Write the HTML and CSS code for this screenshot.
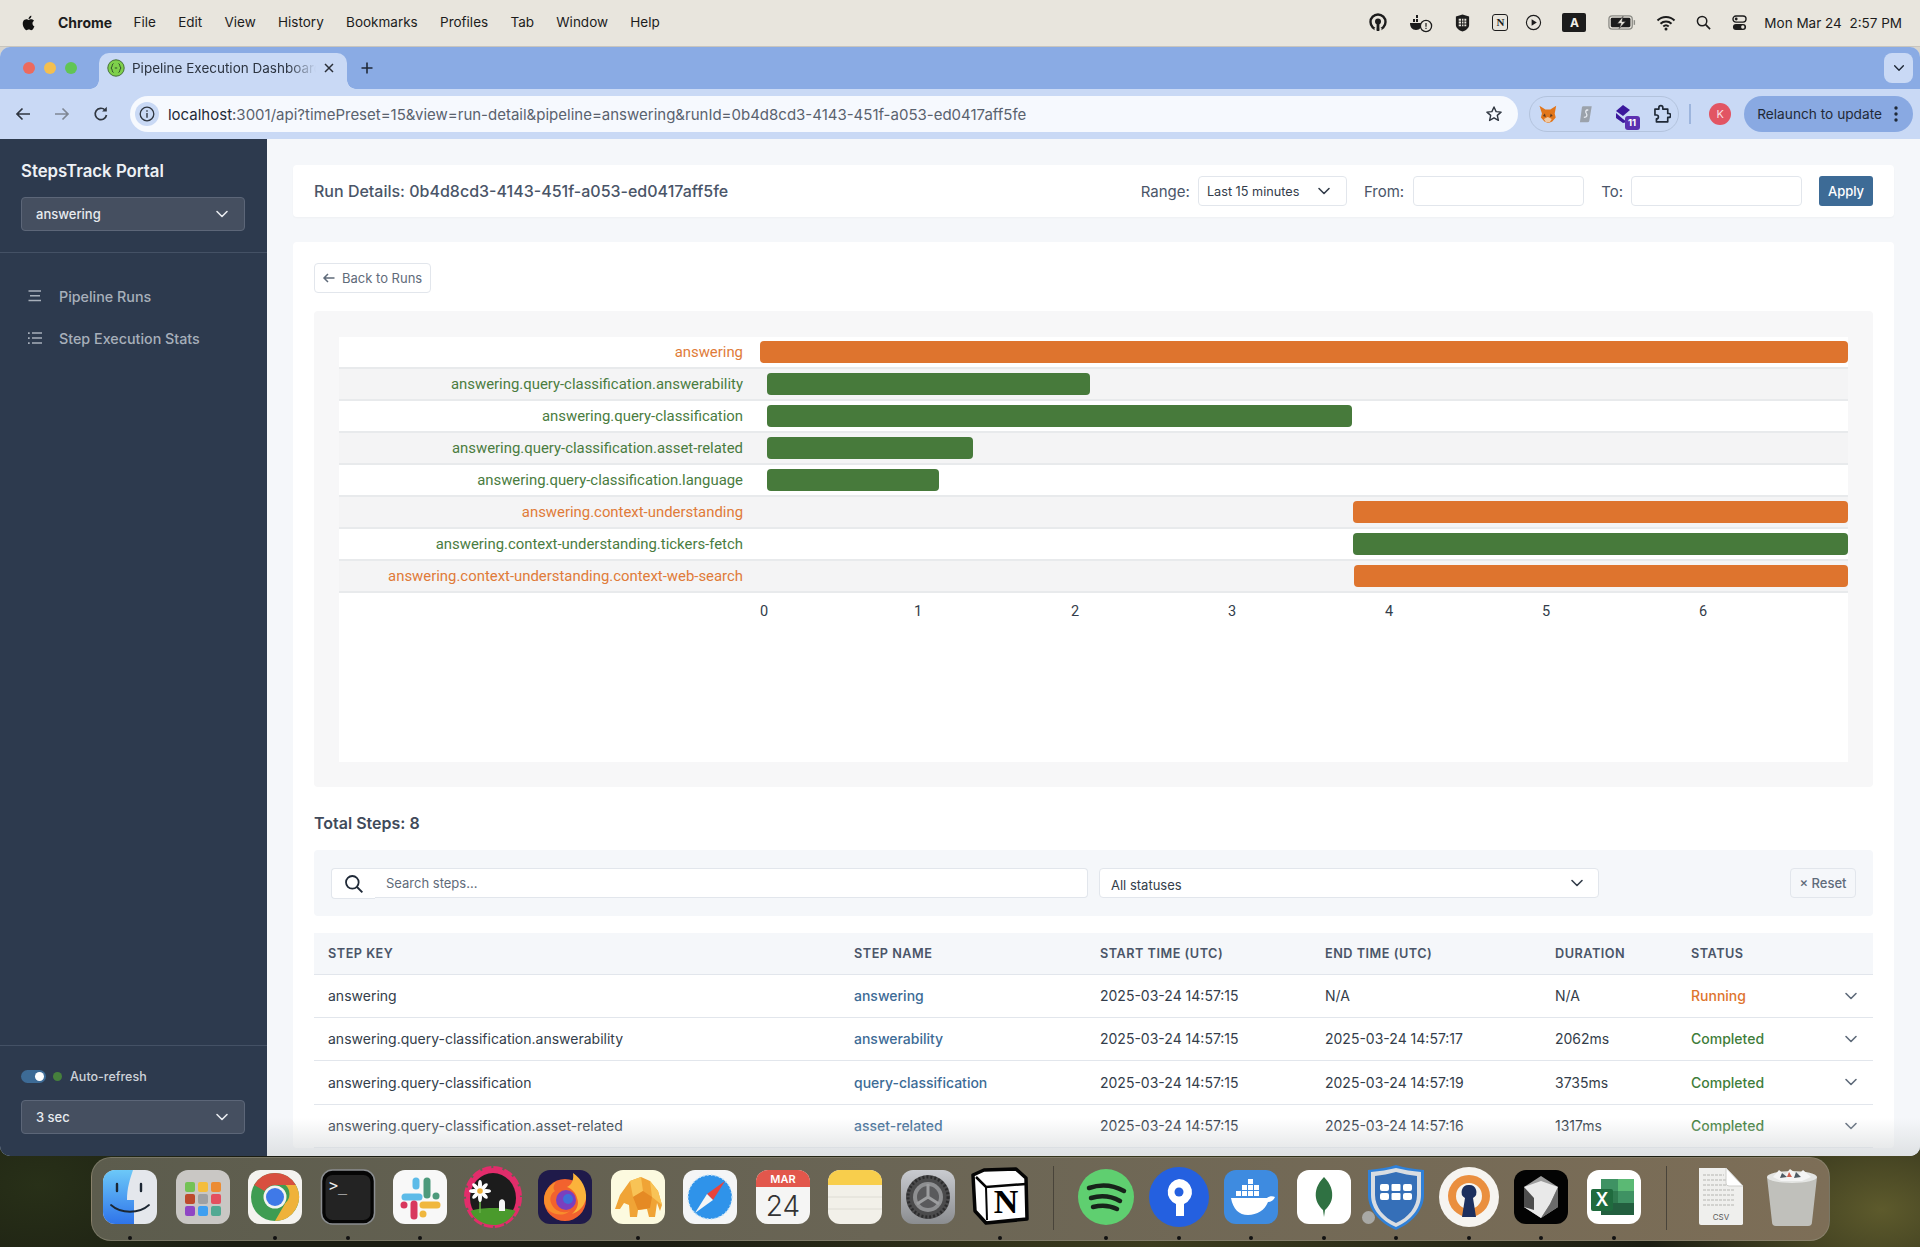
FILE: index.html
```html
<!DOCTYPE html>
<html lang="en">
<head>
    <meta charset="UTF-8">
    <title>Pipeline Execution Dashboard</title>
    <link rel="stylesheet" href="styles.css">
</head>
<body>
    <svg class="sprite">
        <symbol id="chev" viewBox="0 0 16 16"><path d="M3 5.500l5 5 5-5" fill="none" stroke="currentColor" stroke-width="1.600" stroke-linecap="round" stroke-linejoin="round"/></symbol>
    </svg>

    <header class="menubar">
        <svg class="apple" viewBox="0 0 24 24" width="17" height="20"><path d="M17.600 12.700c0-2.600 2.100-3.800 2.200-3.900-1.200-1.800-3.100-2-3.700-2-1.600-.2-3.100.9-3.900.9s-2-.9-3.300-.9c-1.700 0-3.300 1-4.200 2.500-1.800 3.100-.5 7.700 1.300 10.200.9 1.200 1.900 2.600 3.200 2.600s1.800-.8 3.300-.8 2 .8 3.300.8 2.200-1.200 3.100-2.500c1-1.400 1.400-2.800 1.400-2.900-.1 0-2.700-1-2.700-4zM15 5.100c.7-.9 1.200-2 1.100-3.200-1 0-2.300.7-3 1.500-.6.7-1.200 1.900-1.100 3.100 1.200.1 2.300-.6 3-1.400z"/></svg>
        <nav class="menu">
            <b>Chrome</b><span>File</span><span>Edit</span><span>View</span><span>History</span><span>Bookmarks</span><span>Profiles</span><span>Tab</span><span>Window</span><span>Help</span>
        </nav>
        <div class="status">
            <svg viewBox="0 0 20 20" width="20" height="20"><circle cx="10" cy="9" r="7.500" fill="none" stroke="#1c1c1c" stroke-width="2.400"/><circle cx="10" cy="8.500" r="3" fill="#1c1c1c"/><path d="M8.600 9h2.800v9H8.600z" fill="#1c1c1c"/><path d="M6.500 15h2v3h-2zM11.500 15h2v3h-2z" fill="#e8e5dd"/></svg>
            <svg viewBox="0 0 24 20" width="24" height="20"><path d="M1 10h12c0 4-2 7-6 7s-6-3-6-7z" fill="#1c1c1c"/><path d="M4 6h2v3H4zM7 6h2v3H7zM7 2h2v3H7z" fill="#1c1c1c"/><circle cx="17" cy="13" r="5.600" fill="#e8e5dd" stroke="#1c1c1c" stroke-width="1.300"/><path d="M16.400 10h1.200v3.800h-1.200zM16.400 14.800h1.200V16h-1.200z" fill="#1c1c1c"/></svg>
            <svg viewBox="0 0 18 20" width="17" height="20"><path d="M9 1l7 2v9c0 3-3 5.500-7 7-4-1.500-7-4-7-7V3z" fill="#1c1c1c"/><path d="M5 5.500h8v2H5zM5 8.500h8v2H5zM5 11.500h8v2H5z" fill="#e8e5dd"/><path d="M7.500 5h1v9h-1zM10 5h1v9h-1z" fill="#1c1c1c"/></svg>
            <span class="status-n">N</span>
            <svg viewBox="0 0 18 18" width="17" height="17"><circle cx="9" cy="9" r="7.500" fill="none" stroke="#1c1c1c" stroke-width="1.200"/><path d="M7 5.500l5.500 3.500L7 12.500z" fill="#1c1c1c"/></svg>
            <span class="status-a">A</span>
            <svg viewBox="0 0 30 16" width="28" height="15"><rect x="1" y="1" width="25" height="14" rx="3.500" fill="none" stroke="#8c8c86" stroke-width="1.400"/><rect x="3" y="3" width="21" height="10" rx="1.500" fill="#1c1c1c"/><path d="M27.500 5.500h1.500v5h-1.500z" fill="#8c8c86"/><path d="M16 1.500L10 9h4l-2 5.500L19 7h-4z" fill="#e8e5dd" stroke="#1c1c1c" stroke-width=".6"/></svg>
            <svg viewBox="0 0 20 16" width="20" height="16"><path d="M1.500 5.500a12 12 0 0 1 17 0M4.500 8.700a8 8 0 0 1 11 0M7.300 11.500a4 4 0 0 1 5.400 0" fill="none" stroke="#1c1c1c" stroke-width="2"/><circle cx="10" cy="14" r="1.500" fill="#1c1c1c"/></svg>
            <svg viewBox="0 0 16 16" width="15" height="15"><circle cx="6.500" cy="6.500" r="5" fill="none" stroke="#1c1c1c" stroke-width="1.600"/><path d="M10.300 10.300L15 15" stroke="#1c1c1c" stroke-width="1.800"/></svg>
            <svg viewBox="0 0 16 18" width="15" height="18"><rect x="1" y="1.500" width="14" height="6.500" rx="3.200" fill="none" stroke="#1c1c1c" stroke-width="1.400"/><circle cx="4.500" cy="4.700" r="1.500" fill="#1c1c1c"/><rect x="1" y="10" width="14" height="6.500" rx="3.200" fill="#1c1c1c"/><circle cx="11.500" cy="13.200" r="1.800" fill="#e8e5dd"/></svg>
            <span class="clock">Mon Mar 24&nbsp;&nbsp;2:57 PM</span>
        </div>
    </header>

    <div class="window">
        <div class="tabstrip">
            <div class="lights"><i class="red"></i><i class="amber"></i><i class="green"></i></div>
            <div class="tab">
                <svg viewBox="0 0 18 18" width="18" height="18"><circle cx="9" cy="9" r="8.200" fill="#7ed04b" stroke="#46713a"/><path d="M6.500 4.500C5 4.500 5.500 8 4 9c1.500 1 1 4.500 2.500 4.500M11.500 4.500C13 4.500 12.500 8 14 9c-1.500 1-1 4.500-2.500 4.500M7.800 9h2.400" fill="none" stroke="#2f4d2a" stroke-width="1"/></svg>
                <span class="tab-title">Pipeline Execution Dashboard</span>
                <svg viewBox="0 0 12 12" width="12" height="12"><path d="M2 2l8 8M10 2l-8 8" stroke="#2a2f38" stroke-width="1.500"/></svg>
            </div>
            <svg class="new-tab" viewBox="0 0 14 14" width="14" height="14"><path d="M7 1.500v11M1.500 7h11" stroke="#1f2937" stroke-width="1.600"/></svg>
            <button class="tab-list"><svg width="14" height="14"><use href="#chev"/></svg></button>
        </div>

        <div class="toolbar">
            <svg class="nav-icon" viewBox="0 0 18 18" width="18" height="18"><path d="M16 9H3M8.500 3.500L3 9l5.500 5.500" fill="none" stroke="#2f3640" stroke-width="1.700"/></svg>
            <svg class="nav-icon" viewBox="0 0 18 18" width="18" height="18"><path d="M2 9h13M9.500 3.500L15 9l-5.500 5.500" fill="none" stroke="#7f8794" stroke-width="1.700"/></svg>
            <svg class="nav-icon" viewBox="0 0 18 18" width="18" height="18"><path d="M14.500 10a5.700 5.700 0 1 1-1.500-5" fill="none" stroke="#2f3640" stroke-width="1.700"/><path d="M14.800 1.800v4.700h-4.700z" fill="#2f3640"/></svg>
            <div class="omnibox">
                <span class="site-info"><svg viewBox="0 0 16 16" width="16" height="16"><circle cx="8" cy="8" r="6.800" fill="none" stroke="#2f3640" stroke-width="1.300"/><path d="M7.300 7h1.400v4.700H7.300zM7.300 4.300h1.400v1.400H7.300z" fill="#2f3640"/></svg></span>
                <span class="url"><b>localhost</b>:3001/api?timePreset=15&amp;view=run-detail&amp;pipeline=answering&amp;runId=0b4d8cd3-4143-451f-a053-ed0417aff5fe</span>
                <svg viewBox="0 0 18 18" width="18" height="18"><path d="M9 2l2.100 4.600 5 .5-3.800 3.300 1.100 5L9 12.800l-4.400 2.600 1.100-5L1.900 7.100l5-.5z" fill="none" stroke="#2f3640" stroke-width="1.400" stroke-linejoin="round"/></svg>
            </div>
            <div class="extensions">
                <svg viewBox="0 0 20 20" width="20" height="20"><path d="M1.500 1.500l6 4h5l6-4-1.500 8 1 4-3.500 4-3 1.500h-2l-3-1.500-3.500-4 1-4z" fill="#e2761b"/><path d="M7 9.500L5 12l3 1zM13 9.500l2 2.500-3 1z" fill="#5c3a21"/><path d="M6 15l4-2 4 2-2 3.500H8z" fill="#f0c9a4"/></svg>
                <svg viewBox="0 0 20 20" width="20" height="20"><path d="M7 2h9l-2.500 15a2 2 0 0 1-2 1.500H4l2-15A2 2 0 0 1 7 2z" fill="#9ba2ab"/><path d="M12.500 6c-3-.5-3 2-2 3.500s1 4-2.500 4" fill="none" stroke="#e8ecf2" stroke-width="1.300"/></svg>
                <span class="ext-stack">
                    <svg viewBox="0 0 20 20" width="20" height="20"><path d="M9 1l7 5-7 6-7-5z" fill="#3b189c"/><path d="M2 9l7 6 4 3-4 1-7-5z" fill="#3b189c"/></svg>
                    <b class="ext-badge">11</b>
                </span>
                <svg viewBox="0 0 20 20" width="20" height="20"><path d="M3 5h4V3.500a2 2 0 0 1 4 0V5h5v4.500h1a2 2 0 0 1 0 4h-1V18H4.500v-3a2 2 0 0 0 0-4H3z" fill="none" stroke="#1f2937" stroke-width="1.700" stroke-linejoin="round"/></svg>
            </div>
            <i class="tool-sep"></i>
            <span class="avatar">K</span>
            <div class="relaunch">
                <span>Relaunch to update</span>
                <svg viewBox="0 0 4 18" width="4" height="18"><circle cx="2" cy="3" r="1.700" fill="#1f2937"/><circle cx="2" cy="9" r="1.700" fill="#1f2937"/><circle cx="2" cy="15" r="1.700" fill="#1f2937"/></svg>
            </div>
        </div>

        <div class="app">
            <aside class="sidebar">
                <div class="side-head">
                    <h1>StepsTrack Portal</h1>
                    <div class="side-select"><span>answering</span><svg width="16" height="16"><use href="#chev"/></svg></div>
                </div>
                <ul class="side-nav">
                    <li><svg viewBox="0 0 16 16" width="16" height="16"><path d="M1.500 3h12.500M3 7.800h10M1.500 12.500h12.500" stroke="currentColor" stroke-width="1.500"/></svg>Pipeline Runs</li>
                    <li><svg viewBox="0 0 16 16" width="16" height="16"><path d="M5 3h10M5 8h10M5 13h10" stroke="currentColor" stroke-width="1.500"/><path d="M1 2.200h1.700v1.700H1zM1 7.200h1.700v1.700H1zM1 12.200h1.700v1.700H1z" fill="currentColor"/></svg>Step Execution Stats</li>
                </ul>
                <div class="side-foot">
                    <div class="refresh-row"><span class="switch"></span><i class="live-dot"></i><span>Auto-refresh</span></div>
                    <div class="side-select"><span>3 sec</span><svg width="16" height="16"><use href="#chev"/></svg></div>
                </div>
            </aside>

            <main class="main">
                <section class="topbar">
                    <h2>Run Details: 0b4d8cd3-4143-451f-a053-ed0417aff5fe</h2>
                    <div class="range">
                        <label>Range:</label>
                        <div class="select range-select"><span>Last 15 minutes</span><svg width="16" height="16"><use href="#chev"/></svg></div>
                        <label class="from">From:</label>
                        <input class="date-input" type="text">
                        <label class="to">To:</label>
                        <input class="date-input date-to" type="text">
                        <button class="apply">Apply</button>
                    </div>
                </section>

                <section class="detail">
                    <button class="back"><svg viewBox="0 0 14 14" width="14" height="14"><path d="M12.500 7H2M6 3L2 7l4 4" fill="none" stroke="currentColor" stroke-width="1.500"/></svg>Back to Runs</button>

                    <div class="chart-panel">
                        <div class="chart">
                            <div class="row running"><div class="row-label">answering</div><div class="row-track"><div class="bar bar-root" style="margin-left:0;width:100%"></div></div></div>
                            <div class="row done"><div class="row-label">answering.query-classification.answerability</div><div class="row-track"><div class="bar" style="margin-left:.64%;width:29.7%"></div></div></div>
                            <div class="row done"><div class="row-label">answering.query-classification</div><div class="row-track"><div class="bar" style="margin-left:.64%;width:53.8%"></div></div></div>
                            <div class="row done"><div class="row-label">answering.query-classification.asset-related</div><div class="row-track"><div class="bar" style="margin-left:.64%;width:18.95%"></div></div></div>
                            <div class="row done"><div class="row-label">answering.query-classification.language</div><div class="row-track"><div class="bar" style="margin-left:.64%;width:15.8%"></div></div></div>
                            <div class="row running"><div class="row-label">answering.context-understanding</div><div class="row-track"><div class="bar" style="margin-left:54.5%;width:45.5%"></div></div></div>
                            <div class="row done"><div class="row-label">answering.context-understanding.tickers-fetch</div><div class="row-track"><div class="bar" style="margin-left:54.5%;width:45.5%"></div></div></div>
                            <div class="row running"><div class="row-label">answering.context-understanding.context-web-search</div><div class="row-track"><div class="bar" style="margin-left:54.6%;width:45.4%"></div></div></div>
                            <div class="axis"><span>0</span><span>1</span><span>2</span><span>3</span><span>4</span><span>5</span><span>6</span></div>
                        </div>
                    </div>

                    <h3 class="total">Total Steps: 8</h3>

                    <div class="filters">
                        <div class="search">
                            <span class="search-icon"><svg viewBox="0 0 18 18" width="20" height="20"><circle cx="7.500" cy="7.500" r="5.700" fill="none" stroke="#1f2937" stroke-width="1.600"/><path d="M11.700 11.700L16.500 16.500" stroke="#1f2937" stroke-width="1.700"/></svg></span>
                            <input class="search-input" type="text" placeholder="Search steps...">
                        </div>
                        <div class="select status-select"><span>All statuses</span><svg width="16" height="16"><use href="#chev"/></svg></div>
                        <button class="reset">&times; Reset</button>
                    </div>

                    <table class="steps">
                        <thead>
                            <tr><th class="c-key">Step Key</th><th class="c-name">Step Name</th><th class="c-start">Start Time (UTC)</th><th class="c-end">End Time (UTC)</th><th class="c-dur">Duration</th><th class="c-status">Status</th><th></th></tr>
                        </thead>
                        <tbody>
                            <tr><td>answering</td><td><a>answering</a></td><td>2025-03-24 14:57:15</td><td>N/A</td><td>N/A</td><td class="st-running">Running</td><td><svg width="16" height="16"><use href="#chev"/></svg></td></tr>
                            <tr><td>answering.query-classification.answerability</td><td><a>answerability</a></td><td>2025-03-24 14:57:15</td><td>2025-03-24 14:57:17</td><td>2062ms</td><td class="st-done">Completed</td><td><svg width="16" height="16"><use href="#chev"/></svg></td></tr>
                            <tr><td>answering.query-classification</td><td><a>query-classification</a></td><td>2025-03-24 14:57:15</td><td>2025-03-24 14:57:19</td><td>3735ms</td><td class="st-done">Completed</td><td><svg width="16" height="16"><use href="#chev"/></svg></td></tr>
                            <tr><td>answering.query-classification.asset-related</td><td><a>asset-related</a></td><td>2025-03-24 14:57:15</td><td>2025-03-24 14:57:16</td><td>1317ms</td><td class="st-done">Completed</td><td><svg width="16" height="16"><use href="#chev"/></svg></td></tr>
                        </tbody>
                    </table>
                </section>
            </main>
        </div>
    </div>

    <footer class="dock">
        <div class="dock-item on"><svg viewBox="0 0 60 60"><defs><linearGradient id="fb" x1="0" y1="0" x2="0" y2="1"><stop offset="0" stop-color="#6cc8f8"/><stop offset="1" stop-color="#2f74ea"/></linearGradient></defs><rect x="3" y="3" width="54" height="54" rx="12" fill="#e4e7ec"/><path d="M15 3h18c-3 9-6 18-6 30h7v24H15A12 12 0 0 1 3 45V15A12 12 0 0 1 15 3z" fill="url(#fb)"/><path d="M17 17v7M41 17v7" stroke="#1c2733" stroke-width="2.400" stroke-linecap="round"/><path d="M11 38c10 9 28 9 38 0" fill="none" stroke="#1c2733" stroke-width="1.800" stroke-linecap="round"/></svg></div>
        <div class="dock-item"><svg viewBox="0 0 60 60"><rect x="3" y="3" width="54" height="54" rx="12" fill="#c9c7c4"/><rect x="12" y="15" width="10" height="10" rx="2" fill="#74c255"/><rect x="25" y="15" width="10" height="10" rx="2" fill="#f4bd3c"/><rect x="38" y="15" width="10" height="10" rx="2" fill="#ec8c33"/><rect x="12" y="27" width="10" height="10" rx="2" fill="#bd4a2c"/><rect x="25" y="27" width="10" height="10" rx="2" fill="#9ea0a2"/><rect x="38" y="27" width="10" height="10" rx="2" fill="#e4505f"/><rect x="12" y="39" width="10" height="10" rx="2" fill="#8f46c4"/><rect x="25" y="39" width="10" height="10" rx="2" fill="#3f9ff0"/><rect x="38" y="39" width="10" height="10" rx="2" fill="#52a993"/></svg></div>
        <div class="dock-item on"><svg viewBox="0 0 60 60"><rect x="3" y="3" width="54" height="54" rx="12" fill="#f4f3ef"/><circle cx="30" cy="30" r="24" fill="#3f9c52"/><path d="M9.200 18A24 24 0 0 1 50.800 18H30a12 12 0 0 0-10.400 6z" fill="#d8503f"/><path d="M50.800 18A24 24 0 0 1 30 54l10.400-18a12 12 0 0 0 0-18z" fill="#efb23a"/><circle cx="30" cy="30" r="11.500" fill="#f4f3ef"/><circle cx="30" cy="30" r="9" fill="#3f79e8"/></svg></div>
        <div class="dock-item on"><svg viewBox="0 0 60 60"><rect x="3.500" y="3" width="53" height="54" rx="11" fill="#050505" stroke="#8a8d90" stroke-width="1.500"/><rect x="7.500" y="8" width="45" height="45" rx="7" fill="#232323"/><text class="term-text" x="11" y="24">&gt;_</text></svg></div>
        <div class="dock-item on"><svg viewBox="0 0 60 60"><rect x="3" y="3" width="54" height="54" rx="12" fill="#f8f8f8"/><g stroke-width="7" stroke-linecap="round"><path d="M37 14v14" stroke="#4d9a7c"/><path d="M46 29h0" stroke="#4d9a7c"/><path d="M15 30h14" stroke="#5dbbe8"/><path d="M26 14v5" stroke="#5dbbe8"/><path d="M33 38h14" stroke="#f0b73e"/><path d="M33 47h0" stroke="#f0b73e"/><path d="M24 37v12" stroke="#d8385e"/><path d="M14 38h0" stroke="#d8385e"/></g></svg></div>
        <div class="dock-item"><svg viewBox="0 0 60 60"><ellipse cx="30" cy="30" rx="27" ry="29" fill="none" stroke="#e22d6b" stroke-width="4" stroke-dasharray="9 2"/><ellipse cx="30" cy="30" rx="27" ry="29" fill="#e22d6b"/><ellipse cx="30" cy="31" rx="23" ry="25" fill="#1c1c1c"/><path d="M7.500 44c8-4 36-4 45 0-5 10-14 14-22 14S12 54 7.500 44z" fill="#4a9a2c"/><path d="M36 36c0-5 6-5 6 0v8h-6z" fill="#f5f5f5"/><path d="M17 30v16" stroke="#69b048" stroke-width="1.500"/><g fill="#fff"><ellipse cx="17" cy="18" rx="2" ry="5"/><ellipse cx="17" cy="30" rx="2" ry="5"/><ellipse cx="11" cy="24" rx="5" ry="2"/><ellipse cx="23" cy="24" rx="5" ry="2"/><ellipse cx="12.800" cy="19.800" rx="2" ry="4.500" transform="rotate(-45 12.800 19.800)"/><ellipse cx="21.200" cy="28.200" rx="2" ry="4.500" transform="rotate(-45 21.200 28.200)"/><ellipse cx="21.200" cy="19.800" rx="2" ry="4.500" transform="rotate(45 21.200 19.800)"/><ellipse cx="12.800" cy="28.200" rx="2" ry="4.500" transform="rotate(45 12.800 28.200)"/></g><circle cx="17" cy="24" r="2.800" fill="#efb23a"/></svg></div>
        <div class="dock-item"><svg viewBox="0 0 60 60"><rect x="3" y="3" width="54" height="54" rx="12" fill="#1f1a4a"/><circle cx="30" cy="33" r="21" fill="#f2622e"/><path d="M38 6c9 6 14 16 13 26-2 8-8 13-14 15 6-5 7-11 5-16-1-5-5-9-10-11 5-2 7-8 6-14z" fill="#fbb33b"/><path d="M9 33c0-8 5-15 12-18-3 4-3 7-1 9-5 3-6 9-3 14 3 6 11 9 18 6-9 8-26 2-26-11z" fill="#f88d2c"/><circle cx="31" cy="33" r="10" fill="#7b3fbe"/><circle cx="33" cy="32" r="5" fill="#3f6fd8"/></svg></div>
        <div class="dock-item on"><svg viewBox="0 0 60 60"><rect x="3" y="3" width="54" height="54" rx="12" fill="#fcfadf"/><path d="M7 42l5-14 10-14 11-4 9 4 8 10 4 14-2 6-3-8-2 14h-6l-2-8-9 1-1 7h-7l-1-12-5-2-4 6z" fill="#f0a436"/><path d="M22 14l11-4 2 14-10 6zM42 14l8 10 4 14-10-8z" fill="#f8c356"/><path d="M25 30l10-6 9 6-2 11-12 2z" fill="#e58a24"/></svg></div>
        <div class="dock-item"><svg viewBox="0 0 60 60"><rect x="3" y="3" width="54" height="54" rx="12" fill="#f4f5f6"/><circle cx="30" cy="30" r="22" fill="#2f93ea"/><circle cx="30" cy="30" r="22" fill="none" stroke="#bfe0f8" stroke-width="1.500" stroke-dasharray="1.500 2.500"/><path d="M45 14L33 33l-6-6z" fill="#e8433c"/><path d="M15 46l12-19 6 6z" fill="#f5f5f5"/></svg></div>
        <div class="dock-item"><svg viewBox="0 0 60 60"><rect x="3" y="3" width="54" height="54" rx="12" fill="#f5f5f4"/><path d="M3 20V15A12 12 0 0 1 15 3h30a12 12 0 0 1 12 12v5z" fill="#e2574c"/><text class="cal-month" x="30" y="16">MAR</text><text class="cal-day" x="30" y="49">24</text></svg></div>
        <div class="dock-item"><svg viewBox="0 0 60 60"><rect x="3" y="3" width="54" height="54" rx="12" fill="#f2f0e9"/><path d="M3 18v-3A12 12 0 0 1 15 3h30a12 12 0 0 1 12 12v3z" fill="#f8ce4c"/><path d="M3 30h54M3 42h54" stroke="#dedcd4"/></svg></div>
        <div class="dock-item"><svg viewBox="0 0 60 60"><defs><linearGradient id="sg" x1="0" y1="0" x2="0" y2="1"><stop offset="0" stop-color="#c9cbd0"/><stop offset="1" stop-color="#8b8d90"/></linearGradient></defs><rect x="3" y="3" width="54" height="54" rx="12" fill="url(#sg)"/><circle cx="30" cy="30" r="22" fill="#4b4b4c"/><circle cx="30" cy="30" r="20" fill="none" stroke="#2c2c2d" stroke-width="3" stroke-dasharray="2 2"/><circle cx="30" cy="30" r="15" fill="#8e8f91"/><circle cx="30" cy="30" r="11" fill="#5a5a5c"/><path d="M30 30V17M30 30L19 37M30 30l11 7" stroke="#9d9ea0" stroke-width="3"/></svg></div>
        <div class="dock-item on"><svg viewBox="0 0 60 60"><path d="M14 3l32-1 10 9 1 41-41 4-11-12L3 8z" fill="#fff" stroke="#050505" stroke-width="3.500" stroke-linejoin="round"/><path d="M6 10l10 10 40-3" fill="none" stroke="#050505" stroke-width="2.500"/><path d="M16 20l1 33" stroke="#050505" stroke-width="2"/><text class="notion-n" x="36" y="46">N</text></svg></div>
        <i class="dock-sep"></i>
        <div class="dock-item on"><svg viewBox="0 0 60 60"><ellipse cx="30" cy="30" rx="28" ry="28" fill="#5fcf70"/><path d="M13 21c12-4 24-3 35 3M15 31c10-3 20-2 29 3M17 40c8-2 16-2 24 2" fill="none" stroke="#17231a" stroke-width="4.500" stroke-linecap="round"/></svg></div>
        <div class="dock-item on"><svg viewBox="0 0 60 60"><circle cx="30" cy="30" r="30" fill="#2460e0"/><path d="M30 12a13 13 0 0 1 5 25v12h-8V37a13 13 0 0 1 3-25z" fill="#fff"/><circle cx="30" cy="25" r="4.500" fill="#2460e0"/></svg></div>
        <div class="dock-item on"><svg viewBox="0 0 60 60"><rect x="3" y="3" width="54" height="54" rx="12" fill="#3e8be0"/><path d="M10 31h36c2-2 6-2 8-1-1 3-4 5-7 5-3 8-11 13-20 13-9 0-15-6-17-17z" fill="#fff"/><g fill="#fff"><rect x="15" y="24" width="5" height="5"/><rect x="21" y="24" width="5" height="5"/><rect x="27" y="24" width="5" height="5"/><rect x="33" y="24" width="5" height="5"/><rect x="21" y="18" width="5" height="5"/><rect x="27" y="18" width="5" height="5"/><rect x="33" y="18" width="5" height="5"/><rect x="27" y="12" width="5" height="5"/></g></svg></div>
        <div class="dock-item on"><svg viewBox="0 0 60 60"><rect x="3" y="3" width="54" height="54" rx="12" fill="#fff"/><path d="M30 10c7 7 9 14 8 21-1 6-5 10-7 12l-1 7-1-7c-2-2-6-6-7-12-1-7 1-14 8-21z" fill="#2f7142"/></svg></div>
        <div class="dock-item on"><svg viewBox="0 0 60 60"><path d="M30-2c9 3 19 4 28 5v25c0 15-12 28-28 35C14 56 2 43 2 28V3c9-1 19-2 28-5z" fill="#2f80d8"/><path d="M30 1c8 2 16 3 25 4v23c0 14-11 26-25 32C16 54 5 42 5 28V5c9-1 17-2 25-4z" fill="#d9dde2"/><path d="M30 5c7 2 14 3 21 4v19c0 12-9 23-21 28C18 51 9 40 9 28V9c7-1 14-2 21-4z" fill="#356fb8"/><g fill="#fff"><rect x="14" y="17" width="9" height="7" rx="2"/><rect x="25.500" y="17" width="9" height="7" rx="1"/><rect x="37" y="17" width="9" height="7" rx="2"/><rect x="14" y="26" width="9" height="7" rx="2"/><rect x="25.500" y="26" width="9" height="7" rx="1"/><rect x="37" y="26" width="9" height="7" rx="2"/></g></svg><span class="lock-badge"></span></div>
        <div class="dock-item on"><svg viewBox="0 0 60 60"><circle cx="30" cy="30" r="30" fill="#f6f4f0"/><circle cx="30" cy="29" r="21" fill="#ea8f3f"/><circle cx="30" cy="29" r="13" fill="#f6f4f0"/><path d="M30 18a7 7 0 0 1 4 13l3 19H23l3-19a7 7 0 0 1 4-13z" fill="#1c2f5e"/></svg></div>
        <div class="dock-item on"><svg viewBox="0 0 60 60"><rect x="3" y="3" width="54" height="54" rx="12" fill="#030303"/><path d="M30 9l17 11v20L30 51 13 40V20z" fill="#9c9c9c"/><path d="M13 20l17-6 17 6-8 17-9 14-17-11z" fill="#e9e9e9"/><path d="M47 20l-8 17-9 14 17-11z" fill="#6b6b6b"/><path d="M13 20l10 11v12L13 40z" fill="#4d4d4d"/></svg></div>
        <div class="dock-item on"><svg viewBox="0 0 60 60"><rect x="3" y="3" width="54" height="54" rx="12" fill="#fff"/><rect x="17" y="12" width="33" height="36" rx="2" fill="#2f7a4f"/><rect x="34" y="12" width="16" height="12" fill="#5bb974"/><rect x="17" y="12" width="17" height="12" fill="#3f9263"/><rect x="17" y="36" width="33" height="12" fill="#235f3f"/><rect x="34" y="24" width="16" height="12" fill="#3f9263"/><rect x="7" y="22" width="22" height="22" rx="2" fill="#1f6b3e"/><text class="xl-x" x="18" y="39">X</text></svg></div>
        <i class="dock-sep"></i>
        <div class="dock-item"><svg viewBox="0 0 60 60"><path d="M9 1h27l17 18v38a2 2 0 0 1-2 1H11a2 2 0 0 1-2-2z" fill="#efefed"/><path d="M13 8h21M13 13h24M13 18h32M13 23h32M13 28h32M13 33h32M13 38h32" stroke="#d2d2cf" stroke-width="2" stroke-dasharray="3 1"/><path d="M36 1v15a3 3 0 0 0 3 3h14z" fill="#fff" stroke="#cfcfcc"/><text class="csv-text" x="31" y="53">CSV</text></svg></div>
        <div class="dock-item"><svg viewBox="0 0 60 60"><path d="M5 10h50l-5 45a4 4 0 0 1-4 4H14a4 4 0 0 1-4-4z" fill="#c9ccc9" opacity=".88"/><ellipse cx="30" cy="10" rx="25" ry="6" fill="#e4e5e3"/><path d="M11 10l6-7 6 5 5-6 8 6 5-5 8 7-9 4H19z" fill="#f4f4f4"/><path d="M20 6l5 4-7 1zM34 5l5 5-7 1z" fill="#4e5a63"/><path d="M27 5l3 5h-5z" fill="#d0604f"/></svg></div>
    </footer>
</body>
</html>
```

FILE: styles.css
```css
* {
    box-sizing: border-box;
}

html, body {
    margin: 0;
    height: 100%;
}

body {
    width: 1920px;
    height: 1247px;
    overflow: hidden;
    display: flex;
    flex-direction: column;
    font-family: Inter, "Liberation Sans", sans-serif;
    color: #1f2937;
    background-color: #1b1d12;
    background-image:
        linear-gradient(#d8d5cd, #d8d5cd),
        radial-gradient(ellipse at 98% 97%, #5d5a2c 0, transparent 9%),
        radial-gradient(ellipse at 60% 100%, #3c3c1e 0, transparent 30%),
        radial-gradient(ellipse at 2% 95%, #283018 0, transparent 8%);
    background-size: 100% 70px, auto, auto, auto;
    background-repeat: no-repeat;
}

.sprite {
    display: none;
}

button, input {
    font-family: inherit;
}

/* mac menu bar */
.menubar {
    height: 47px;
    flex: none;
    display: flex;
    align-items: center;
    padding: 0 18px 1px 20px;
    background: #e8e5dd;
    border-bottom: 1px solid #c8c5be;
    font-size: 13.500px;
    color: #1c1c1c;
}
.apple {
    fill: #111;
    margin-right: 21px;
}
.menu {
    display: flex;
    gap: 22.300px;
}
.menu b {
    font-size: 14px;
    font-weight: 700;
    margin-right: -1px;
}
.status {
    margin-left: auto;
    display: flex;
    align-items: center;
}
.status > svg, .status > span {
    flex: none;
}
.status > :nth-child(1) { margin-right: 21px; }
.status > :nth-child(2) { margin-right: 21px; }
.status > :nth-child(3) { margin-right: 21px; }
.status > :nth-child(4) { margin-right: 17px; }
.status > :nth-child(5) { margin-right: 20px; }
.status > :nth-child(6) { margin-right: 22px; }
.status > :nth-child(7) { margin-right: 20px; }
.status > :nth-child(8) { margin-right: 20px; }
.status > :nth-child(9) { margin-right: 21px; }
.status > :nth-child(10) { margin-right: 17px; }
.status-n {
    width: 16px;
    height: 17px;
    border: 1.5px solid #1c1c1c;
    border-radius: 3px;
    font: 700 11px/14px "Liberation Serif", serif;
    text-align: center;
}
.status-a {
    width: 24px;
    height: 19px;
    background: #1c1c1c;
    color: #f2f0ea;
    border-radius: 2px;
    font-size: 12px;
    font-weight: 700;
    line-height: 19px;
    text-align: center;
}
.clock {
    font-size: 13.500px;
    white-space: nowrap;
}

/* browser window */
.window {
    height: 1109px;
    flex: none;
    display: flex;
    flex-direction: column;
    border-radius: 10px;
    overflow: hidden;
    background: #c9d9f5;
}
.tabstrip {
    height: 42px;
    flex: none;
    display: flex;
    align-items: flex-end;
    background: #8aabe4;
    padding: 0 7px 0 23px;
}
.lights {
    display: flex;
    gap: 9px;
    align-self: center;
    margin-right: 22px;
}
.lights i {
    width: 12px;
    height: 12px;
    border-radius: 50%;
}
.lights .red { background: #ec6a5e; }
.lights .amber { background: #f4bf4f; }
.lights .green { background: #61c554; }
.tab {
    position: relative;
    width: 248px;
    height: 36px;
    display: flex;
    align-items: center;
    padding: 0 12px 6px 8px;
    gap: 7px;
    background: #c9d9f5;
    border-radius: 10px 10px 0 0;
    font-size: 13.500px;
    color: #2c3440;
}
.tab::before, .tab::after {
    content: "";
    position: absolute;
    bottom: 0;
    width: 9px;
    height: 9px;
}
.tab::before {
    left: -9px;
    background: radial-gradient(circle at 0 0, transparent 8.500px, #c9d9f5 9px);
}
.tab::after {
    right: -9px;
    background: radial-gradient(circle at 100% 0, transparent 8.500px, #c9d9f5 9px);
}
.tab > svg {
    flex: none;
}
.tab-title {
    flex: 1;
    overflow: hidden;
    white-space: nowrap;
    -webkit-mask-image: linear-gradient(to right, #000 85%, transparent);
    mask-image: linear-gradient(to right, #000 85%, transparent);
}
.new-tab {
    align-self: center;
    margin-left: 13px;
}
.tab-list {
    margin-left: auto;
    align-self: flex-start;
    margin-top: 6px;
    width: 29px;
    height: 30px;
    padding: 0;
    border: none;
    border-radius: 8px;
    background: #c9d9f5;
    color: #1f2937;
    display: flex;
    align-items: center;
    justify-content: center;
}

.toolbar {
    height: 50px;
    flex: none;
    display: flex;
    align-items: center;
    padding: 0 7px 0 14px;
    background: #c9d9f5;
}
.nav-icon {
    margin-right: 21px;
}
.nav-icon:nth-child(3) {
    margin-right: 20px;
}
.omnibox {
    width: 1390px;
    height: 36px;
    display: flex;
    align-items: center;
    padding: 0 15px 0 5px;
    border-radius: 18px;
    background: #f6f9fe;
    font-size: 15px;
    color: #5a626e;
}
.site-info {
    width: 24px;
    height: 24px;
    flex: none;
    display: flex;
    align-items: center;
    justify-content: center;
    border-radius: 50%;
    background: #c9d9f5;
    margin-right: 9px;
}
.url {
    flex: 1;
    white-space: nowrap;
    overflow: hidden;
}
.url b {
    font-weight: 400;
    color: #1f2937;
}
.extensions {
    width: 150px;
    height: 36px;
    margin-left: 11px;
    display: flex;
    align-items: center;
    gap: 18px;
    padding: 0 7px 0 8px;
    border: 1px solid #b3c3dd;
    border-radius: 18px;
}
.ext-stack {
    position: relative;
    display: flex;
}
.ext-badge {
    position: absolute;
    right: -6px;
    bottom: -6px;
    width: 15px;
    height: 14px;
    border-radius: 3px;
    background: #5b2fb0;
    color: #fff;
    font-size: 9.500px;
    line-height: 14px;
    text-align: center;
}
.tool-sep {
    width: 2px;
    height: 20px;
    margin: 0 18px 0 10px;
    background: #9db5dd;
}
.avatar {
    width: 22px;
    height: 22px;
    margin-right: 13px;
    border-radius: 50%;
    background: #e25563;
    color: #f8dfe2;
    font-size: 11px;
    line-height: 22px;
    text-align: center;
}
.relaunch {
    width: 169px;
    height: 36px;
    display: flex;
    align-items: center;
    justify-content: space-between;
    padding: 0 15px 0 13px;
    border-radius: 18px;
    background: #89a9e2;
    font-size: 13.700px;
    color: #1f2937;
}

/* app */
.app {
    flex: 1;
    display: flex;
    min-height: 0;
}
.sidebar {
    width: 267px;
    flex: none;
    display: flex;
    flex-direction: column;
    background: #2d3a4e;
    color: #fff;
}
.side-head {
    height: 114px;
    padding: 21px 22px 0 21px;
    border-bottom: 1px solid #445165;
}
.side-head h1 {
    margin: 0 0 15px;
    font-size: 16.800px;
    font-weight: 600;
    line-height: 22px;
    color: #eef1f5;
}
.side-select {
    height: 34px;
    display: flex;
    align-items: center;
    justify-content: space-between;
    padding: 0 14px;
    background: #454f60;
    border: 1px solid #5c6678;
    border-radius: 4px;
    font-size: 13px;
    font-weight: 500;
    color: #e8ebef;
}
.side-nav {
    list-style: none;
    margin: 0;
    padding: 22px 0 0 27px;
    font-size: 14.300px;
    font-weight: 500;
    color: #a7afba;
}
.side-nav li {
    height: 42px;
    display: flex;
    align-items: center;
    gap: 16px;
}
.side-foot {
    margin-top: auto;
    height: 111px;
    padding: 23px 22px 0 21px;
    border-top: 1px solid #445165;
}
.refresh-row {
    height: 14px;
    display: flex;
    align-items: center;
    margin-bottom: 17px;
    font-size: 12.500px;
    font-weight: 500;
    color: #cdd2d9;
}
.switch {
    position: relative;
    width: 25px;
    height: 13px;
    border-radius: 7px;
    background: #3d6b96;
}
.switch::after {
    content: "";
    position: absolute;
    right: 2px;
    top: 2px;
    width: 9px;
    height: 9px;
    border-radius: 50%;
    background: #fff;
}
.live-dot {
    width: 9px;
    height: 9px;
    margin: 0 8px 0 7px;
    border-radius: 50%;
    background: #46803c;
}

.main {
    flex: 1;
    position: relative;
    padding: 26px 26px 0;
    background: #f5f7fa;
    overflow: hidden;
}
.main::after {
    content: "";
    position: absolute;
    left: 0;
    right: 0;
    bottom: 0;
    height: 38px;
    background: linear-gradient(to bottom, rgba(215, 218, 220, 0), rgba(215, 218, 220, .75));
}
.topbar {
    height: 52px;
    display: flex;
    align-items: center;
    justify-content: space-between;
    padding: 0 21px;
    margin-bottom: 25px;
    background: #fff;
    border-radius: 4px;
    box-shadow: 0 1px 2px rgba(0, 0, 0, .03);
}
.topbar h2 {
    margin: 0;
    font-size: 16px;
    font-weight: 500;
    color: #4a5568;
}
.range {
    display: flex;
    align-items: center;
    font-size: 15px;
    color: #4a5568;
}
.select {
    display: flex;
    align-items: center;
    justify-content: space-between;
    background: #fff;
    border: 1px solid #e2e6ec;
    border-radius: 4px;
    color: #333d4a;
}
.range-select {
    width: 149px;
    height: 30px;
    margin-left: 8px;
    padding: 0 14px 0 8px;
    font-size: 12.700px;
}
.from {
    margin-left: 17px;
}
.to {
    margin-left: 17px;
}
.date-input {
    width: 171px;
    height: 30px;
    margin-left: 9px;
    background: #fff;
    border: 1px solid #e2e6ec;
    border-radius: 4px;
}
.date-to {
    margin-left: 8px;
}
.apply {
    width: 54px;
    height: 30px;
    margin-left: 17px;
    padding: 0;
    border: none;
    border-radius: 3px;
    background: #3d6b96;
    color: #fff;
    font-size: 13px;
    font-weight: 500;
}
.detail {
    padding: 21px 21px 0;
    background: #fff;
    border-radius: 4px;
}
.back {
    height: 30px;
    display: flex;
    align-items: center;
    gap: 6px;
    padding: 0 8px 0 7px;
    background: #fff;
    border: 1px solid #e2e6ec;
    border-radius: 4px;
    color: #5f6b7a;
    font-size: 13px;
    margin-bottom: 18px;
}
.chart-panel {
    height: 476px;
    padding: 26px 25px 25px 25px;
    background: #f7f7f8;
    border-radius: 4px;
}
.chart {
    height: 100%;
    background: #fff;
    font-family: Roboto, "Liberation Sans", sans-serif;
    font-size: 14.900px;
}
.row {
    height: 32px;
    display: flex;
    border-bottom: 2px solid #e8eaec;
}
.row:nth-child(even) {
    background: #f4f4f5;
}
.row-label {
    width: 404px;
    flex: none;
    text-align: right;
    line-height: 31px;
    white-space: nowrap;
}
.row-track {
    flex: 1;
    margin-left: 17px;
    display: flex;
    align-items: center;
}
.bar {
    height: 22px;
    border-radius: 4px;
    flex: none;
}
.done .row-label { color: #4a7c3f; }
.running .row-label { color: #e07b39; }
.done .bar { background: #477a3b; }
.running .bar { background: #de742e; }
.axis {
    display: flex;
    margin-left: 421px;
    padding-top: 10px;
    color: #333d4a;
    font-size: 14.500px;
}
.axis span {
    flex: none;
    width: 157px;
}
.axis span:first-child {
    width: 154px;
}
.axis span:last-child {
    width: auto;
}
.total {
    margin: 24px 0 15px;
    font-size: 16px;
    font-weight: 600;
    line-height: 24px;
    color: #3f4a5a;
}
.filters {
    height: 66px;
    display: flex;
    align-items: center;
    gap: 11px;
    padding: 0 17px;
    background: #f5f7fa;
    border-radius: 4px;
}
.search {
    width: 757px;
    height: 30px;
    display: flex;
}
.search-icon {
    width: 44px;
    height: 31px;
    flex: none;
    display: flex;
    align-items: center;
    justify-content: center;
    background: #fff;
    border: 1px solid #e2e6ec;
    border-right: none;
    border-radius: 4px 0 0 4px;
}
.search-input {
    flex: 1;
    min-width: 0;
    padding: 0 11px;
    border: 1px solid #e2e6ec;
    border-left: none;
    border-radius: 0 4px 4px 0;
    background: #fff;
    font-size: 13px;
    outline: none;
}
.search-input::placeholder {
    color: #5f6b7a;
}
.status-select {
    width: 500px;
    height: 30px;
    padding: 3px 13px 0 11px;
    font-size: 13px;
}
.status-select svg {
    margin-top: -4px;
}
.reset {
    width: 66px;
    height: 30px;
    margin-left: auto;
    padding: 0;
    background: #f5f7fa;
    border: 1px solid #e2e6ec;
    border-radius: 4px;
    color: #5f6b7a;
    font-size: 13px;
    font-weight: 500;
}
.steps {
    width: 100%;
    margin-top: 17px;
    border-collapse: collapse;
    table-layout: fixed;
    font-size: 14px;
    color: #333d4a;
}
.steps th {
    height: 41px;
    padding: 0 0 0 14px;
    background: #f5f7fa;
    border-bottom: 1px solid #e2e6ec;
    text-align: left;
    text-transform: uppercase;
    font-size: 12.700px;
    font-weight: 600;
    letter-spacing: .5px;
    color: #4a5568;
}
.steps td {
    height: 43px;
    padding: 0 0 0 14px;
    border-bottom: 1px solid #e2e6ec;
}
.steps tbody tr:nth-child(3) td {
    height: 44px;
}
.steps td:last-child {
    padding-left: 13px;
}
.c-key { width: 526px; }
.c-name { width: 246px; }
.c-start { width: 225px; }
.c-end { width: 230px; }
.c-dur { width: 136px; }
.c-status { width: 153px; }
.steps a {
    color: #3d6b96;
    font-weight: 500;
}
.st-running {
    color: #de742e;
    font-weight: 500;
}
.st-done {
    color: #3f7d3a;
    font-weight: 500;
}
.steps td svg {
    display: block;
    color: #5f6b7a;
}

/* dock */
.dock {
    width: 1739px;
    height: 84px;
    flex: none;
    margin: 1px 0 0 91px;
    display: flex;
    gap: 12.500px;
    padding: 9px 8px 0;
    border-radius: 20px;
    background: linear-gradient(to right, #5c5c4d, #6a6555 45%, #7d6e57);
    border: 1px solid rgba(150, 145, 125, .5);
}
.dock-item {
    width: 60px;
    flex: none;
    position: relative;
}
.dock-item svg {
    display: block;
    width: 60px;
    height: 60px;
    overflow: visible;
}
.dock-item.on::after {
    content: "";
    display: block;
    width: 4px;
    height: 4px;
    margin: 9px auto 0;
    border-radius: 50%;
    background: #111;
}
.dock-sep {
    width: 21px;
    flex: none;
    height: 64px;
    margin-top: -1px;
    background: linear-gradient(#49443a, #49443a) center / 1px 100% no-repeat;
}
.lock-badge {
    position: absolute;
    left: -4px;
    top: 44px;
    width: 13px;
    height: 13px;
    border-radius: 50%;
    background: #a9a9a5;
}
.term-text {
    font-family: "DejaVu Sans Mono", monospace;
    font-size: 15px;
    fill: #eee;
}
.cal-month {
    font-size: 11px;
    font-weight: 600;
    fill: #fff;
    text-anchor: middle;
}
.cal-day {
    font-size: 28px;
    font-weight: 300;
    fill: #333;
    text-anchor: middle;
}
.notion-n {
    font-family: "Liberation Serif", serif;
    font-size: 34px;
    font-weight: 700;
    text-anchor: middle;
}
.xl-x {
    font-size: 18px;
    font-weight: 600;
    fill: #fff;
    text-anchor: middle;
}
.csv-text {
    font-size: 8px;
    fill: #5a5a5a;
    text-anchor: middle;
}
```
